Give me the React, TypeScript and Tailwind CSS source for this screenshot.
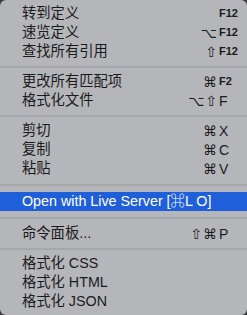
type Item = {
  label: string;
  mods?: string;
  keyName?: string;
  small?: boolean;
  active?: boolean;
};

const groups: Item[][] = [
  [
    { label: '转到定义', keyName: 'F12', small: true },
    { label: '速览定义', mods: '⌥', keyName: 'F12', small: true },
    { label: '查找所有引用', mods: '⇧', keyName: 'F12', small: true },
  ],
  [
    { label: '更改所有匹配项', mods: '⌘', keyName: 'F2', small: true },
    { label: '格式化文件', mods: '⌥⇧', keyName: 'F' },
  ],
  [
    { label: '剪切', mods: '⌘', keyName: 'X' },
    { label: '复制', mods: '⌘', keyName: 'C' },
    { label: '粘贴', mods: '⌘', keyName: 'V' },
  ],
  [{ label: 'Open with Live Server [⌘L O]', active: true }],
  [{ label: '命令面板...', mods: '⇧⌘', keyName: 'P' }],
  [
    { label: '格式化 CSS' },
    { label: '格式化 HTML' },
    { label: '格式化 JSON' },
  ],
];

const sepHeights = ['h-[11px]', 'h-[11px]', 'h-[14px]', 'h-[13px]', 'h-[11px]'];

function MenuRow({ item }: { item: Item }) {
  return (
    <div
      className={`flex h-[19px] items-center pl-[22px] ${
        item.active ? 'bg-[#1f5fd9] text-white' : 'text-[#1b1b1c]'
      }`}
    >
      <span className="flex-1 text-[14.3px] leading-none whitespace-nowrap">{item.label}</span>
      {item.keyName && (
        <>
          <span className="pr-[1px] text-[14px] tracking-[1px] leading-none font-['DejaVu_Sans',sans-serif]">
            {item.mods}
          </span>
          <span
            className={`w-[28px] leading-none ${
              item.small ? 'text-[11px] font-bold' : 'text-[14px]'
            }`}
          >
            {item.keyName}
          </span>
        </>
      )}
    </div>
  );
}

export default function App() {
  return (
    <div className="h-[315px] w-[247px] bg-[#3a3a3c]">
      <div className="h-full w-full overflow-hidden rounded-[6px] bg-[#b5b6ba] pt-[4px] font-['Liberation_Sans','Noto_Sans_CJK_SC',sans-serif]">
        {groups.map((group, gi) => (
          <div key={gi}>
            {gi > 0 && (
              <div className={`flex items-center ${sepHeights[gi - 1]}`}>
                <div className="h-[2px] w-full bg-[#a6a7ab]" />
              </div>
            )}
            {group.map((item) => (
              <MenuRow key={item.label} item={item} />
            ))}
          </div>
        ))}
      </div>
    </div>
  );
}
